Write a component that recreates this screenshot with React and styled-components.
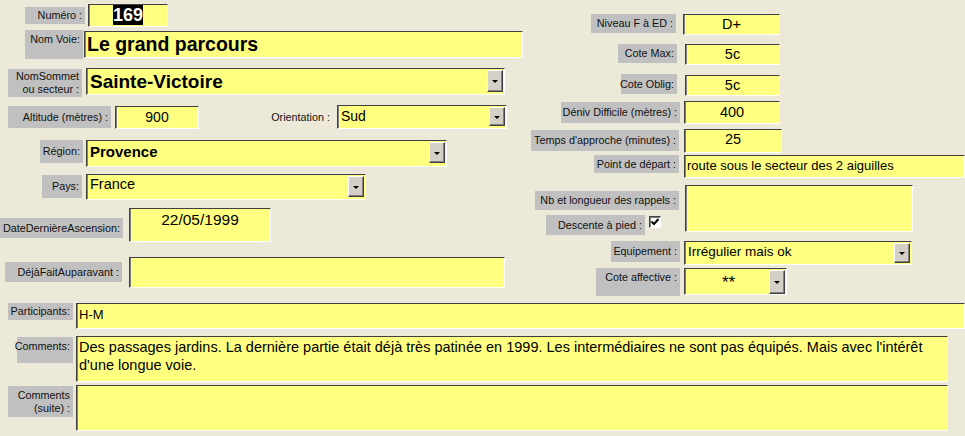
import React from "react";
import styled, { createGlobalStyle } from "styled-components";

const GlobalStyle = createGlobalStyle`
  html, body {
    margin: 0;
    padding: 0;
    background: #ece9d8;
  }
  body {
    font-family: "Liberation Sans", Arial, sans-serif;
    color: #000;
  }
`;

const Form = styled.div`
  width: 965px;
  height: 436px;
  background: #ece9d8;
  overflow: hidden;
  display: flex;
  flex-direction: column;
`;

const Top = styled.div`
  display: grid;
  grid-template-columns: 530px 435px;
  height: 303px;
`;

const Column = styled.div`
  display: flex;
  flex-direction: column;
  padding-top: ${({ $pt }) => $pt}px;
`;

const Bottom = styled.div`
  display: flex;
  flex-direction: column;
`;

const Row = styled.div`
  display: flex;
  align-items: flex-start;
  height: ${({ $h }) => $h}px;
  flex-shrink: 0;
`;

const Stack = styled.div`
  display: flex;
  flex-direction: column;
  margin-left: ${({ $ml }) => $ml || 0}px;
`;

const Label = styled.div`
  box-sizing: border-box;
  width: ${({ $w }) => $w}px;
  height: ${({ $h }) => $h}px;
  margin-left: ${({ $ml }) => $ml || 0}px;
  margin-top: ${({ $dy }) => $dy || 0}px;
  background: ${({ $plain }) => ($plain ? "transparent" : "#c0c0c0")};
  display: flex;
  justify-content: flex-end;
  align-items: ${({ $top }) => ($top ? "flex-start" : "center")};
  padding: ${({ $top }) => ($top ? "3px" : "0")} 3px 0 0;
  font-size: 10.8px;
  line-height: 13px;
  color: #111;
  text-align: right;
  white-space: nowrap;
  flex-shrink: 0;
`;

const Field = styled.div`
  box-sizing: border-box;
  width: ${({ $w }) => $w}px;
  height: ${({ $h }) => $h}px;
  margin-left: ${({ $ml }) => $ml || 0}px;
  margin-top: ${({ $dy }) => $dy || 0}px;
  background: #ffff80;
  border-style: solid;
  border-width: 1px;
  border-color: #404040 #ffffff #ffffff #404040;
  box-shadow: inset 1px 0 0 #808080;
  padding: ${({ $pad }) => $pad || "1px 3px"};
  font-size: ${({ $fs }) => $fs || 13}px;
  font-weight: ${({ $bold }) => ($bold ? 700 : 400)};
  line-height: ${({ $lh }) => $lh || 18}px;
  text-align: ${({ $align }) => $align || "left"};
  white-space: ${({ $wrap }) => ($wrap ? "normal" : "nowrap")};
  overflow: hidden;
  flex-shrink: 0;
`;

const Combo = styled(Field)`
  display: flex;
  align-items: flex-start;
  padding: 0 1px 0 3px;
`;

const ComboValue = styled.div`
  flex: 1;
  text-align: ${({ $align }) => $align || "left"};
  padding-top: ${({ $pt }) => $pt || 1}px;
  overflow: hidden;
`;

const DropButton = styled.div`
  box-sizing: border-box;
  width: 16px;
  height: ${({ $h }) => $h}px;
  margin-top: 1px;
  background: #d4d0c8;
  border-style: solid;
  border-width: 1px;
  border-color: #ffffff #404040 #404040 #ffffff;
  box-shadow: inset -1px -1px 0 #808080;
  display: flex;
  align-items: center;
  justify-content: center;
  flex-shrink: 0;
  &::after {
    content: "";
    display: block;
    border-left: 3px solid transparent;
    border-right: 3px solid transparent;
    border-top: 3px solid #000;
    margin-top: 1px;
  }
`;

const Selected = styled.span`
  background: #000;
  color: #fff;
`;

const CheckRow = styled.div`
  display: flex;
  align-items: flex-start;
  margin-top: 5px;
`;

const CheckBox = styled.div`
  box-sizing: border-box;
  width: 12px;
  height: 12px;
  margin-left: 4px;
  margin-top: 1px;
  background: #fff;
  border-style: solid;
  border-width: 1px;
  border-color: #404040 #ffffff #ffffff #404040;
  box-shadow: inset 1px 1px 0 #808080;
  display: flex;
  align-items: center;
  justify-content: center;
`;

const Check = () => (
  <svg width="8" height="8" viewBox="0 0 8 8">
    <path d="M0.5 3.5 L3 6 L7.5 1" stroke="#000" strokeWidth="2" fill="none" />
  </svg>
);

const App = () => {
  return (
    <>
      <GlobalStyle />
      <Form>
        <Top>
          <Column $pt={4}>
            <Row $h={26}>
              <Label $ml={25} $w={60} $h={17} $dy={3}>Numéro :</Label>
              <Field $ml={3} $w={80} $h={23} $fs={18} $bold $align="center" $lh={19}>
                <Selected>169</Selected>
              </Field>
            </Row>
            <Row $h={38}>
              <Label $ml={25} $w={58} $h={29} $top>Nom Voie:</Label>
              <Field $ml={1} $w={439} $h={27} $dy={1} $fs={19.5} $bold $lh={24} $pad="0 2px">
                Le grand parcours
              </Field>
            </Row>
            <Row $h={37}>
              <Label $ml={8} $w={74} $h={28} $dy={1}>
                NomSommet
                <br />
                ou secteur :
              </Label>
              <Combo $ml={4} $w={419} $h={27} $fs={19} $bold $lh={23}>
                <ComboValue>Sainte-Victoire</ComboValue>
                <DropButton $h={22} />
              </Combo>
            </Row>
            <Row $h={35}>
              <Label $ml={8} $w={103} $h={22} $dy={1}>Altitude (mètres) :</Label>
              <Field $ml={4} $w={84} $h={23} $dy={1} $fs={14} $align="center" $lh={19}>
                900
              </Field>
              <Label $plain $ml={70} $w={64} $h={24}>Orientation :</Label>
              <Combo $ml={4} $w={170} $h={24} $fs={14} $lh={18}>
                <ComboValue $pt={0}>Sud</ComboValue>
                <DropButton $h={19} />
              </Combo>
            </Row>
            <Row $h={34}>
              <Label $ml={40} $w={43} $h={23}>Région:</Label>
              <Combo $ml={3} $w={361} $h={27} $fs={15} $bold $lh={20}>
                <ComboValue $pt={1}>Provence</ComboValue>
                <DropButton $h={21} />
              </Combo>
            </Row>
            <Row $h={34}>
              <Label $ml={42} $w={40} $h={23} $dy={1}>Pays:</Label>
              <Combo $ml={4} $w={280} $h={26} $fs={14.5} $lh={17}>
                <ComboValue $pt={1}>France</ComboValue>
                <DropButton $h={21} />
              </Combo>
            </Row>
            <Row $h={49}>
              <Label $w={123} $h={20} $dy={10}>DateDernièreAscension:</Label>
              <Field $ml={6} $w={142} $h={34} $fs={15.5} $align="center" $lh={19}>
                22/05/1999
              </Field>
            </Row>
            <Row $h={43}>
              <Label $ml={5} $w={117} $h={20} $dy={5}>DéjàFaitAuparavant :</Label>
              <Field $ml={7} $w={376} $h={31} />
            </Row>
          </Column>

          <Column $pt={14}>
            <Row $h={30}>
              <Label $ml={61} $w={85} $h={19}>Niveau F à ED :</Label>
              <Field $ml={7} $w={97} $h={21} $fs={14.5} $align="center" $lh={17}>
                D+
              </Field>
            </Row>
            <Row $h={30}>
              <Label $ml={88} $w={59} $h={19}>Cote Max:</Label>
              <Field $ml={8} $w={95} $h={21} $fs={14.5} $align="center" $lh={17}>
                5c
              </Field>
            </Row>
            <Row $h={27}>
              <Label $ml={91} $w={56} $h={20}>Cote Oblig:</Label>
              <Field $ml={8} $w={95} $h={21} $dy={1} $fs={14.5} $align="center" $lh={17}>
                5c
              </Field>
            </Row>
            <Row $h={28}>
              <Label $ml={31} $w={119} $h={21} $dy={1}>Déniv Difficile (mètres) :</Label>
              <Field $ml={4} $w={96} $h={23} $fs={14.5} $align="center" $lh={19}>
                400
              </Field>
            </Row>
            <Row $h={26}>
              <Label $ml={1} $w={148} $h={21} $dy={1}>Temps d'approche (minutes) :</Label>
              <Field $ml={5} $w={98} $h={24} $fs={14.5} $align="center" $lh={17}>
                25
              </Field>
            </Row>
            <Row $h={30}>
              <Label $ml={64} $w={85} $h={18}>Point de départ :</Label>
              <Field $ml={5} $w={281} $h={23} $fs={13} $lh={18} $pad="1px 2px">
                route sous le secteur des 2 aiguilles
              </Field>
            </Row>
            <Row $h={56}>
              <Stack>
                <Label $ml={5} $w={144} $h={19} $dy={6}>Nb et longueur des rappels :</Label>
                <CheckRow>
                  <Label $ml={16} $w={99} $h={20}>Descente à pied :</Label>
                  <CheckBox>
                    <Check />
                  </CheckBox>
                </CheckRow>
              </Stack>
              <Field $ml={6} $w={228} $h={47} />
            </Row>
            <Row $h={27}>
              <Label $ml={81} $w={69} $h={21}>Equipement :</Label>
              <Combo $ml={4} $w={228} $h={24} $fs={13.5} $lh={18}>
                <ComboValue $pt={1}>Irrégulier mais ok</ComboValue>
                <DropButton $h={20} />
              </Combo>
            </Row>
            <Row $h={32}>
              <Label $ml={66} $w={84} $h={28} $top>Cote affective :</Label>
              <Combo $ml={4} $w={103} $h={27} $fs={17} $lh={20}>
                <ComboValue $align="center" $pt={4}>**</ComboValue>
                <DropButton $h={24} />
              </Combo>
            </Row>
          </Column>
        </Top>

        <Bottom>
          <Row $h={33}>
            <Label $ml={8} $w={65} $h={17}>Participants:</Label>
            <Field $ml={3} $w={889} $h={26} $fs={13} $lh={20} $pad="1px 2px">
              H-M
            </Field>
          </Row>
          <Row $h={49}>
            <Label $ml={17} $w={56} $h={26} $dy={1} $top>Comments:</Label>
            <Field $ml={3} $w={872} $h={46} $fs={14.5} $lh={18} $pad="1px 2px">
              Des passages jardins. La dernière partie était déjà très patinée en 1999. Les
              intermédiaires ne sont pas équipés. Mais avec l'intérêt
              <br />
              d'une longue voie.
            </Field>
          </Row>
          <Row $h={51}>
            <Label $ml={8} $w={65} $h={31} $dy={1} $top>
              Comments
              <br />
              (suite) :
            </Label>
            <Field $ml={3} $w={872} $h={46} />
          </Row>
        </Bottom>
      </Form>
    </>
  );
};

export default App;
